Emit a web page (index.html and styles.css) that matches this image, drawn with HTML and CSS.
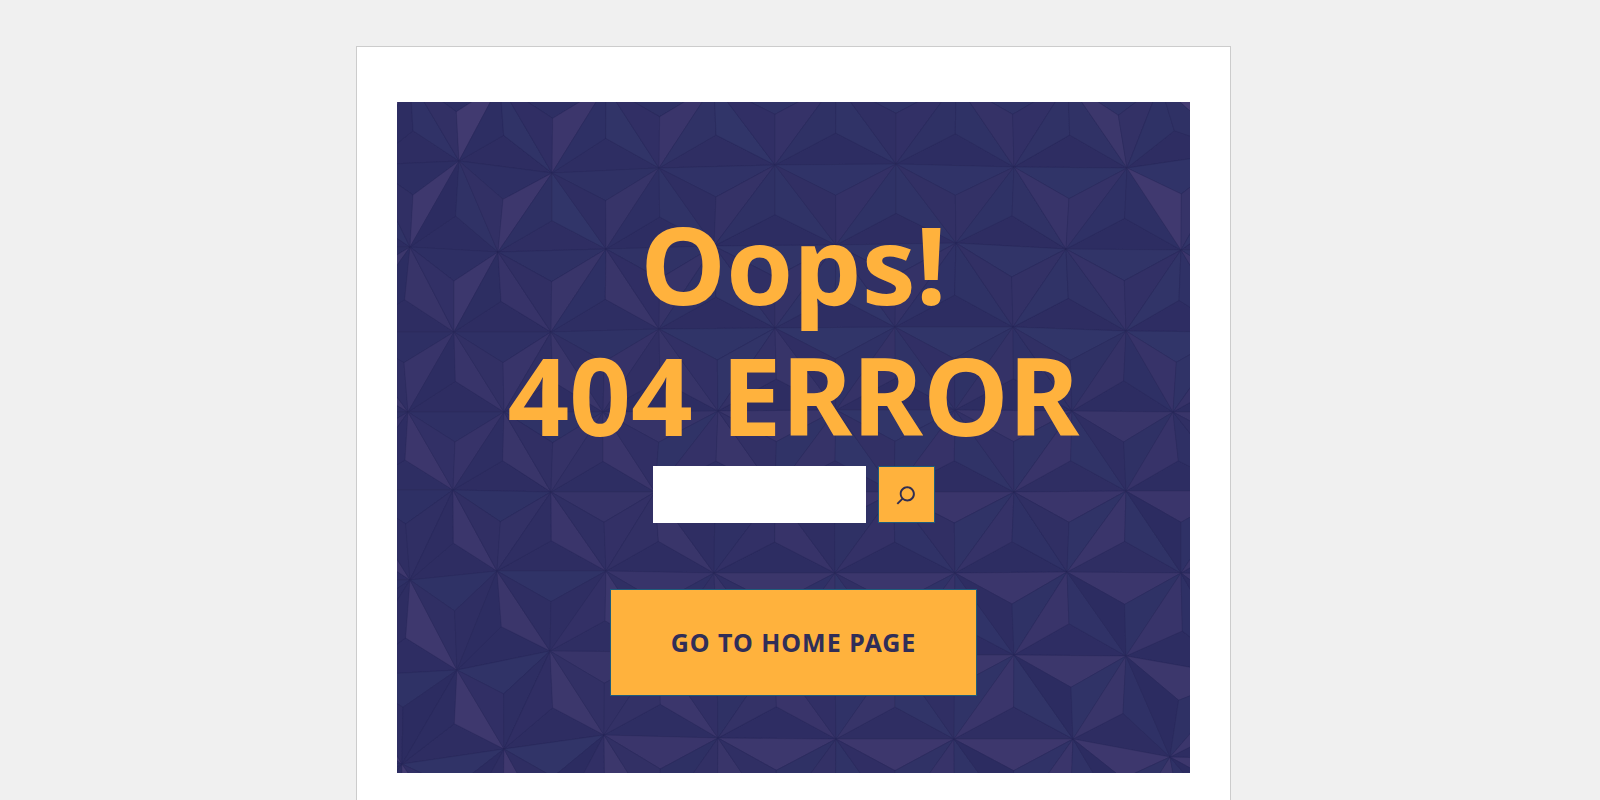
FILE: index.html
```
<!DOCTYPE html>
<html lang="en">
<head>
    <meta charset="UTF-8">
    <meta name="viewport" content="width=device-width, initial-scale=1.0">
    <title>Page not found</title>
    <link rel="stylesheet" href="styles.css">
</head>
<body>
    <main class="card">
        <section class="hero">
            <svg class="hero-pattern" id="pattern" viewBox="397 102 793 671" preserveAspectRatio="xMidYMid slice" aria-hidden="true"></svg>
            <div class="hero-content">
                <h1>Oops!<br>404 ERROR</h1>
                <form class="search-form" role="search">
                    <input type="search" name="s" class="search-input" aria-label="Search">
                    <button type="submit" class="search-button" aria-label="Search">
                        <svg viewBox="0 0 24 24" width="30" height="30">
                            <path d="M13 5c-3.3 0-6 2.7-6 6 0 1.4.5 2.7 1.3 3.7l-3.8 3.8 1.1 1.1 3.8-3.8c1 .8 2.3 1.3 3.7 1.3 3.3 0 6-2.7 6-6S16.3 5 13 5zm0 10.5c-2.5 0-4.5-2-4.5-4.5s2-4.5 4.5-4.5 4.5 2 4.5 4.5-2 4.5-4.5 4.5z"></path>
                        </svg>
                    </button>
                </form>
                <a href="#" class="home-link">GO TO HOME PAGE</a>
            </div>
        </section>
    </main>
    <script src="pattern.js"></script>
</body>
</html>
```

FILE: styles.css
```
* {
    box-sizing: border-box;
}
body {
    margin: 0;
    padding: 46px 13px 46px 0;
    background-color: #f0f0f0;
    font-family: "Segoe UI", "Noto Sans", sans-serif;
}
.card {
    max-width: 875px;
    margin: 0 auto;
    padding: 55px 40px;
    background-color: #fff;
    border: 1px solid #ccc;
}
.hero {
    position: relative;
    overflow: hidden;
    background-color: #2f2e64;
}
.hero-pattern {
    position: absolute;
    top: 0;
    left: 0;
    width: 100%;
    height: 100%;
}
.hero-content {
    position: relative;
    display: flex;
    flex-direction: column;
    align-items: center;
    padding: 96px 20px 77px;
    text-align: center;
}
h1 {
    margin: 0 0 6px;
    font-size: 108px;
    font-weight: 700;
    line-height: 131px;
    color: #ffb23d;
}
.search-form {
    display: flex;
    gap: 12px;
    margin-bottom: 66px;
}
.search-input {
    width: 213px;
    height: 57px;
    padding: 8px 12px;
    border: none;
    border-radius: 0;
    background-color: #fff;
    font-size: 20px;
}
.search-button {
    display: flex;
    align-items: center;
    justify-content: center;
    width: 57px;
    height: 57px;
    padding: 0;
    border: 1px solid #1f5c7c;
    background-color: #ffb23d;
    cursor: pointer;
}
.search-button svg {
    fill: #302e52;
}
.home-link {
    padding: 35px 60px;
    border: 1px solid #1f5c7c;
    background-color: #ffb23d;
    color: #302e58;
    font-size: 25px;
    font-weight: 700;
    line-height: 35px;
    letter-spacing: 1px;
    text-decoration: none;
}
```

FILE: pattern.js
```
// star points of the folded-paper background, row by row
const rows = [
    [[310, 78], [410, 78], [500, 84], [606, 86], [714, 84], [836, 82], [956, 82], [1068, 82], [1160, 84], [1260, 84]],
    [[370, 165], [459, 161], [552, 173], [659, 168], [775, 165], [896, 164], [1014, 167], [1127, 168], [1236, 152]],
    [[310, 247], [410, 247], [498, 252], [606, 249], [714, 246], [836, 245], [956, 243], [1066, 249], [1181, 250], [1280, 250]],
    [[350, 332], [454, 332], [551, 332], [659, 329], [775, 328], [895, 327], [1013, 327], [1126, 331], [1230, 332]],
    [[310, 412], [408, 412], [504, 412], [603, 412], [718, 411], [836, 410], [955, 410], [1072, 411], [1173, 412], [1280, 412]],
    [[354, 490], [453, 490], [551, 492], [655, 492], [775, 492], [894, 492], [1014, 492], [1126, 491], [1236, 491]],
    [[310, 580], [410, 580], [497, 571], [606, 571], [714, 573], [835, 573], [955, 573], [1067, 572], [1181, 573], [1280, 576]],
    [[350, 676], [457, 670], [550, 651], [659, 652], [775, 655], [895, 655], [1014, 655], [1126, 656], [1240, 676]],
    [[300, 760], [402, 764], [504, 749], [604, 735], [718, 738], [836, 739], [954, 739], [1073, 739], [1170, 757], [1280, 760]],
    [[350, 840], [454, 840], [551, 835], [659, 822], [775, 822], [895, 822], [1014, 822], [1126, 828], [1240, 840]]
];

const svg = document.getElementById('pattern');

function mix(a, b, v) {
    return 'rgb(' + a.map((c, i) => Math.round(c + (b[i] - c) * v)).join(',') + ')';
}

function facet(points, light, blue) {
    const p = document.createElementNS('http://www.w3.org/2000/svg', 'polygon');
    const fill = mix([44, 44, 97], blue ? [54, 61, 112] : [68, 60, 114], Math.max(0, Math.min(1, light)));
    p.setAttribute('points', points.map(q => q.join(',')).join(' '));
    p.setAttribute('fill', fill);
    p.setAttribute('stroke', '#29285a');
    p.setAttribute('stroke-opacity', '0.35');
    svg.appendChild(p);
}

// split one triangle in three facets around its middle
function pyramid(a, b, tip, down) {
    const m = [(a[0] + b[0] + tip[0]) / 3, (a[1] + b[1] + tip[1]) / 3];
    const side = (m[0] - 793) / 396;
    const t = (m[1] - 102) / 671;
    const toLeft = Math.max(0, -side);
    const toRight = Math.max(0, side);
    const wobble = ((Math.round(m[0] * 7 + m[1] * 3) % 10) - 5) / 60;

    if (down) {
        m[1] += 4;
        // light comes from below the middle, so the top rows catch it on the outer edges
        facet([a, b, m], 0.4 + 0.3 * t - 0.35 * toLeft, t < 0.5 || toLeft > 0.5);
        facet([a, tip, m], 0.2 + wobble + 0.8 * toRight * toRight * (1 - 2 * t), false);
        facet([b, tip, m], 0.35 + wobble + toLeft * (0.6 - 1.1 * t), t > 0.3 && toLeft < 0.4);
    } else {
        m[1] -= 4;
        facet([a, b, m], 0.08 + wobble / 2, false);
        facet([a, tip, m], 0.35 + wobble - 0.3 * toLeft + 0.3 * toRight * t, t < 0.35);
        facet([b, tip, m], 0.5 + wobble + 0.5 * toLeft * (t - 0.3) - 0.2 * toRight, side > 0 || t < 0.3);
    }
}

for (let r = 0; r < rows.length - 1; r++) {
    const wideOnTop = rows[r].length > rows[r + 1].length;
    const wide = wideOnTop ? rows[r] : rows[r + 1];
    const narrow = wideOnTop ? rows[r + 1] : rows[r];
    for (let i = 0; i < narrow.length; i++) {
        pyramid(wide[i], wide[i + 1], narrow[i], wideOnTop);
        if (i < narrow.length - 1) {
            pyramid(narrow[i], narrow[i + 1], wide[i + 1], !wideOnTop);
        }
    }
}
```
